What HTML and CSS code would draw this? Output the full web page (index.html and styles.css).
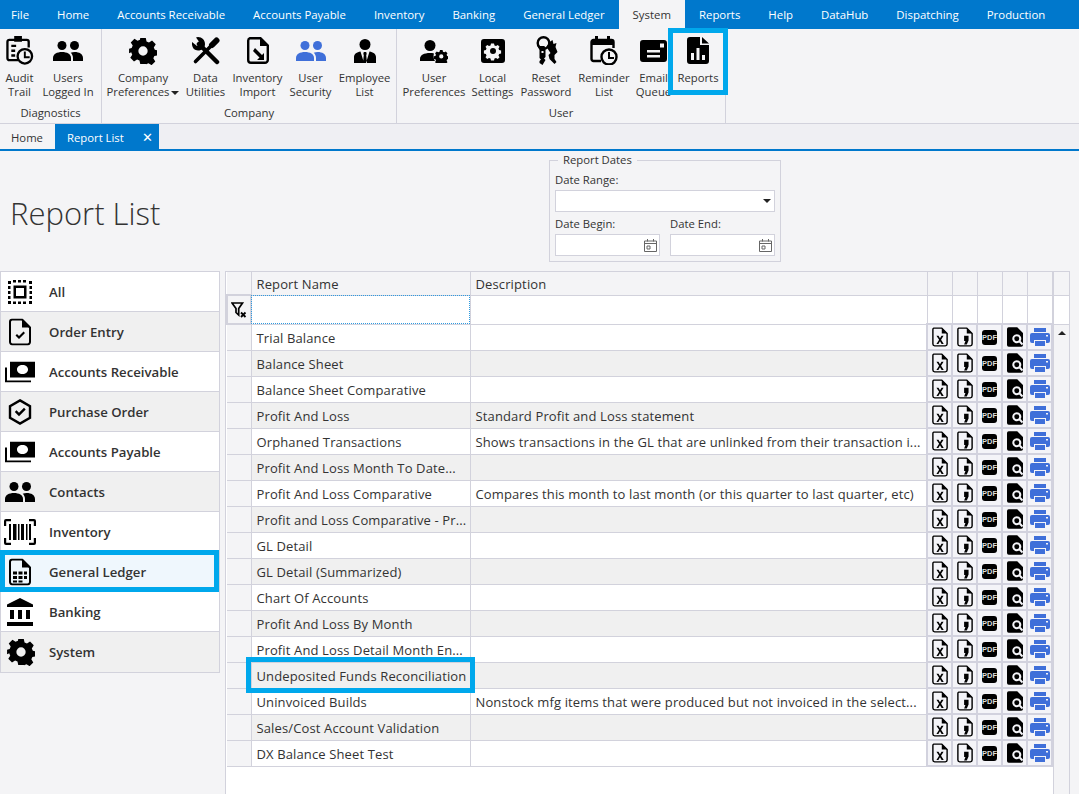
FILE: index.html
```html
<!doctype html>
<html>
<head>
<meta charset="utf-8">
<title>Report List</title>
<link rel="stylesheet" href="styles.css">
</head>
<body>

<svg class="defs" width="0" height="0">
  <symbol id="i-users" viewBox="0 0 30 20">
    <circle cx="9" cy="4.500" r="4.500"/><circle cx="21.500" cy="4.500" r="4.500"/>
    <path d="M0 20v-3c0-4 4-6 9-6s9 2 9 6v3z"/>
    <path d="M20 20v-3c0-2-.8-3.800-2.300-5.200 1.200-.5 2.600-.8 4-.8 4.500 0 8.300 2 8.300 6v3z"/>
  </symbol>
  <symbol id="i-gear" viewBox="0 0 28 28">
    <path fill-rule="evenodd" d="M11 0h6l.8 3.800 2.600 1.100 3.300-2.100 4 4-2.100 3.300 1.100 2.600 3.300.8v5l-3.800.8-1.100 2.600 2.100 3.300-4 4-3.300-2.100-2.600 1.100L17 28h-6l-.8-3.800-2.600-1.100-3.300 2.100-4-4 2.100-3.300-1.100-2.600L-1 16.500v-5l2.800-.8 1.100-2.600-2.100-3.300 4-4 3.300 2.100 2.600-1.100zM14 9a5 5 0 1 0 0 10 5 5 0 0 0 0-10z" transform="translate(1 1) scale(.93)"/>
  </symbol>
  <symbol id="i-audit" viewBox="0 0 28 30">
    <path fill="none" stroke="#000" stroke-width="2.400" d="M12 25H3a2 2 0 0 1-2-2V6a2 2 0 0 1 2-2h18a2 2 0 0 1 2 2v6"/>
    <path d="M8 0h8v6H8zM5 9h5v2.500H5zM5 14h4v2.500H5zM5 19h4v2.500H5z"/>
    <circle cx="19" cy="21" r="7.500" fill="none" stroke="#000" stroke-width="2.400"/>
    <path d="M18 16h2v5h4v2h-6z"/>
  </symbol>
  <symbol id="i-tools" viewBox="0 0 28 28">
    <path fill="none" stroke="#000" stroke-width="4.500" stroke-linecap="round" d="M7 7l18 18"/>
    <path fill-rule="evenodd" d="M6 0c4 0 7 3 7 7s-3 6.500-7 6.500S-.5 10.500 0 5l5 4 3-3-4-5.500C4.500.2 5.200 0 6 0z"/>
    <path fill="none" stroke="#000" stroke-width="3.600" stroke-linecap="round" d="M3.500 24.500L19 9"/>
    <path fill="none" stroke="#000" stroke-width="6" stroke-linecap="round" d="M20 8l4.500-4.500"/>
  </symbol>
  <symbol id="i-import" viewBox="0 0 22 27">
    <path fill="none" stroke="#000" stroke-width="2.400" d="M3 1.200h10.500l7.300 7.300V23a2.800 2.800 0 0 1-2.800 2.800H4A2.800 2.800 0 0 1 1.200 23V4A2.800 2.800 0 0 1 3 1.200z"/>
    <path d="M13 1v8h8zM8 11l7 7 2-2v7H10l2.500-2.500-6.500-6.500z"/>
  </symbol>
  <symbol id="i-employee" viewBox="0 0 22 24">
    <circle cx="11" cy="5.500" r="5.500"/>
    <path d="M0 24v-6c0-3 3-5 6.500-5.500L10 24zM22 24v-6c0-3-3-5-6.500-5.500L12 24zM9.800 13h2.400l.5 2-.5 1 .8 8H9l.8-8-.5-1z"/>
  </symbol>
  <symbol id="i-userpref" viewBox="0 0 28 23">
    <circle cx="10" cy="5.500" r="5.500"/>
    <path d="M0 21v-2c0-4 4-6 10-6 1.500 0 2.800.1 4 .4-.8 2.200-.6 5.400 1 7.600z"/>
    <path fill-rule="evenodd" d="M20 9.500h3l.5 2 1.500.6 1.800-1 2 2-1 1.800.6 1.500 2 .5v3l-2 .5-.6 1.500 1 1.800-2 2-1.800-1-1.500.6-.5 2h-3l-.5-2-1.500-.6-1.800 1-2-2 1-1.800-.6-1.500-2-.5v-3l2-.5.6-1.500-1-1.800 2-2 1.800 1 1.500-.6zM21.500 14.500a2.500 2.500 0 1 0 0 5 2.500 2.500 0 0 0 0-5z" transform="translate(3 2) scale(.85)"/>
  </symbol>
  <symbol id="i-local" viewBox="0 0 24 24">
    <path fill-rule="evenodd" d="M3 0h18a3 3 0 0 1 3 3v18a3 3 0 0 1-3 3H3a3 3 0 0 1-3-3V3a3 3 0 0 1 3-3zM10 4.500l-.5 2-1.500.6-1.800-1-1.700 1.700 1 1.800-.6 1.500-2 .5v2.800l2 .5.6 1.500-1 1.800 1.700 1.700 1.800-1 1.500.6.500 2h3l.5-2 1.500-.6 1.800 1 1.700-1.700-1-1.800.6-1.500 2-.5v-2.800l-2-.5-.6-1.500 1-1.800-1.700-1.700-1.800 1-1.500-.6-.5-2zM12 9a3 3 0 1 1 0 6 3 3 0 0 1 0-6z"/>
  </symbol>
  <symbol id="i-keys" viewBox="0 0 23 29">
    <circle cx="9" cy="7" r="5.800" fill="none" stroke="#000" stroke-width="2.400"/>
    <path d="M3 10h7l1 3v8l-1.500 1.500L11 24l-3 5-3-2v-2l1.500-1.500L5 22v-8z"/>
    <path d="M12 11l3-5 3-2 1 4 3-1-1 4 2 5-3 3v4l2 3-2 2-5-5-1-4 2-2z"/>
    <path d="M7 15h2v2H7z" fill="#f4f4f6"/>
  </symbol>
  <symbol id="i-calendar" viewBox="0 0 28 29">
    <path fill="none" stroke="#000" stroke-width="2.400" d="M11 25H3.500a2 2 0 0 1-2-2V6a2 2 0 0 1 2-2h18a2 2 0 0 1 2 2v6"/>
    <path d="M1.500 4h22v5h-22zM5 0h3v5H5zM17 0h3v5h-3z"/>
    <circle cx="19" cy="21" r="7.500" fill="#f4f4f6" stroke="#000" stroke-width="2.400"/>
    <path d="M18 16h2v5h4v2h-6z"/>
  </symbol>
  <symbol id="i-mail" viewBox="0 0 27 22">
    <path fill-rule="evenodd" d="M3 0h21a3 3 0 0 1 3 3v16a3 3 0 0 1-3 3H3a3 3 0 0 1-3-3V3a3 3 0 0 1 3-3zM20 3.500v4h4v-4zM7 10v2.500h13V10zM7 15v2.500h13V15z"/>
  </symbol>
  <symbol id="i-report" viewBox="0 0 22 27">
    <path fill-rule="evenodd" d="M3 0h10v8h9v16a3 3 0 0 1-3 3H3a3 3 0 0 1-3-3V3a3 3 0 0 1 3-3zM15 0l7 6.500h-7zM4 16v7h3v-7zM9.500 11v12h3V11zM15 18v5h3v-5z"/>
  </symbol>
  <symbol id="i-all" viewBox="0 0 24 24">
    <path fill-rule="evenodd" d="M5.500 5.500h13v13h-13zM8 8v8h8V8z"/>
    <path d="M0 1h3v3H0zM5 0h3v2.500H5zM10 0h3v2.500h-3zM15 0h3v2.500h-3zM21 1h3v3h-3zM0 6h2.500v3H0zM0 11h2.500v3H0zM0 16h2.500v3H0zM21.500 6H24v3h-2.500zM21.500 11H24v3h-2.500zM21.500 16H24v3h-2.500zM0 21h3v3H0zM5 21.500h3V24H5zM10 21.500h3V24h-3zM15 21.500h3V24h-3zM21 21h3v3h-3z"/>
  </symbol>
  <symbol id="i-doccheck" viewBox="0 0 22 27">
    <path fill="none" stroke="#000" stroke-width="2" d="M3 1h10l8 8v14.500a2.500 2.500 0 0 1-2.500 2.500H3.500A2.500 2.500 0 0 1 1 23.500V3.500A2.500 2.500 0 0 1 3 1z"/>
    <path d="M13 1v8h8v-1l-7-7zM6.500 17l1.500-1.500 2 2 4.500-4.500 1.500 1.500-6 6z"/>
  </symbol>
  <symbol id="i-money" viewBox="0 0 30 21">
    <path fill-rule="evenodd" d="M5 0h25v16H5zM17.500 3.500c-3.300 0-5.500 2-5.500 4.500s2.200 4.500 5.500 4.500S23 10.500 23 8s-2.200-4.500-5.500-4.500z"/>
    <path d="M0 6h2v13h24v2H0z"/>
  </symbol>
  <symbol id="i-hexcheck" viewBox="0 0 24 26">
    <path fill="none" stroke="#000" stroke-width="2.400" d="M12 1.400l10 5.800v11.600l-10 5.800-10-5.800V7.200z"/>
    <path d="M6.800 13l1.700-1.700 2.500 2.500 5-5 1.700 1.700-6.700 6.700z"/>
  </symbol>
  <symbol id="i-barcode" viewBox="0 0 32 26">
    <path d="M0 7V2a2 2 0 0 1 2-2h5v2.200H2.200V7zM25 0h5a2 2 0 0 1 2 2v5h-2.200V2.200H25zM0 19h2.200v4.800H7V26H2a2 2 0 0 1-2-2zM29.800 19H32v5a2 2 0 0 1-2 2h-5v-2.200h4.800zM5 5h2v16H5zM9 5h3.500v16H9zM14 5h1.500v16H14zM17 5h3v16h-3zM22 5h1.500v16H22zM25 5h2v16h-2z"/>
  </symbol>
  <symbol id="i-ledger" viewBox="0 0 22 27">
    <path fill="none" stroke="#000" stroke-width="2" d="M3 1h10l8 8v14.500a2.500 2.500 0 0 1-2.500 2.500H3.500A2.500 2.500 0 0 1 1 23.500V3.500A2.500 2.500 0 0 1 3 1z"/>
    <path d="M13 1v8h8v-1l-7-7zM4 13h4v3H4zM9.500 13h4v3h-4zM15 13h3v3h-3zM4 17.500h4v3H4zM9.500 17.500h4v3h-4zM15 17.500h3v3h-3zM4 22h4v2H4zM9.500 22h4v2h-4z"/>
  </symbol>
  <symbol id="i-bank" viewBox="0 0 26 28">
    <path d="M13 0l13 6.500V9H0V6.500zM3 12h4v9H3zM11 12h4v9h-4zM19 12h4v9h-4zM0 24h26v4H0z"/>
  </symbol>
  <symbol id="i-xls" viewBox="0 0 18 22">
    <path fill="none" stroke="#000" stroke-width="1.600" d="M2 1h9l6 6v12a2 2 0 0 1-2 2H3a2 2 0 0 1-2-2V2.500A1.500 1.500 0 0 1 2 1z"/>
    <path d="M11 1v6h6zM5 9.500h2.300L9 12.500l1.700-3H13L10.200 14l3 4.800h-2.400L9 15.700l-1.800 3.100H5l3-4.800z"/>
  </symbol>
  <symbol id="i-word" viewBox="0 0 18 22">
    <path fill="none" stroke="#000" stroke-width="1.600" d="M2 1h9l6 6v12a2 2 0 0 1-2 2H3a2 2 0 0 1-2-2V2.500A1.500 1.500 0 0 1 2 1z"/>
    <path d="M11 1v6h6zM8 9.500h5v5.500l-2 4.500H8l1.500-4H8z"/>
  </symbol>
  <symbol id="i-preview" viewBox="0 0 18 22">
    <path fill-rule="evenodd" d="M2 0h9.500L18 6.500V20a2 2 0 0 1-2 2H2a2 2 0 0 1-2-2V2a2 2 0 0 1 2-2zM11 8a5 5 0 1 0 2.700 9.200l3 3 1.600-1.600-3-3A5 5 0 0 0 11 8zm0 2.200a2.800 2.800 0 1 1 0 5.600 2.800 2.800 0 0 1 0-5.600z"/>
  </symbol>
  <symbol id="i-print" viewBox="0 0 20 18">
    <path fill="#3f6fd9" fill-rule="evenodd" d="M4 0h12v4H4zM2 5h16a2 2 0 0 1 2 2v6a2 2 0 0 1-2 2h-2v-3H4v3H2a2 2 0 0 1-2-2V7a2 2 0 0 1 2-2zM5 13h10v5H5zM16 7v1.500h2V7z"/>
  </symbol>
  <symbol id="i-filter" viewBox="0 0 16 16">
    <path fill="none" stroke="#000" stroke-width="1.700" d="M1 1h10.500L7.700 6.500V13L5 10.500V6.500z"/>
    <path fill="none" stroke="#000" stroke-width="1.800" d="M10 10.500l4.500 4.500M14.500 10.500L10 15"/>
  </symbol>
  <symbol id="i-date" viewBox="0 0 13 13">
    <path fill="none" stroke="#666" d="M.5 2h12v10.500H.5zM.5 4.500h12M3.500 0v2.500M9.500 0v2.500M3 7h3v3H3z"/>
  </symbol>
</svg>

<div class="menubar">
  <span class="menu">File</span>
  <span class="menu">Home</span>
  <span class="menu">Accounts Receivable</span>
  <span class="menu">Accounts Payable</span>
  <span class="menu">Inventory</span>
  <span class="menu">Banking</span>
  <span class="menu">General Ledger</span>
  <span class="menu active">System</span>
  <span class="menu">Reports</span>
  <span class="menu">Help</span>
  <span class="menu">DataHub</span>
  <span class="menu">Dispatching</span>
  <span class="menu">Production</span>
</div>

<div class="ribbon">
  <div class="group group-diag">
    <div class="tools">
      <div class="tool"><svg class="ic ic-audit"><use href="#i-audit"/></svg><span>Audit<br>Trail</span></div>
      <div class="tool"><svg class="ic ic-users"><use href="#i-users"/></svg><span>Users<br>Logged In</span></div>
    </div>
    <div class="group-name">Diagnostics</div>
  </div>
  <div class="group group-company">
    <div class="tools">
      <div class="tool"><svg class="ic ic-gear"><use href="#i-gear"/></svg><span>Company<br>Preferences<i class="caret"></i></span></div>
      <div class="tool"><svg class="ic ic-gear"><use href="#i-tools"/></svg><span>Data<br>Utilities</span></div>
      <div class="tool"><svg class="ic ic-doc"><use href="#i-import"/></svg><span>Inventory<br>Import</span></div>
      <div class="tool"><svg class="ic ic-users blue"><use href="#i-users"/></svg><span>User<br>Security</span></div>
      <div class="tool"><svg class="ic ic-employee"><use href="#i-employee"/></svg><span>Employee<br>List</span></div>
    </div>
    <div class="group-name">Company</div>
  </div>
  <div class="group group-user">
    <div class="tools">
      <div class="tool"><svg class="ic ic-userpref"><use href="#i-userpref"/></svg><span>User<br>Preferences</span></div>
      <div class="tool"><svg class="ic ic-local"><use href="#i-local"/></svg><span>Local<br>Settings</span></div>
      <div class="tool"><svg class="ic ic-audit"><use href="#i-keys"/></svg><span>Reset<br>Password</span></div>
      <div class="tool"><svg class="ic ic-audit"><use href="#i-calendar"/></svg><span>Reminder<br>List</span></div>
      <div class="tool"><svg class="ic ic-mail"><use href="#i-mail"/></svg><span>Email<br>Queue</span></div>
      <div class="tool tool-reports"><svg class="ic ic-doc"><use href="#i-report"/></svg><span>Reports</span></div>
    </div>
    <div class="group-name">User</div>
  </div>
</div>

<div class="doc-tabs">
  <span class="doc-tab">Home</span>
  <span class="doc-tab current">Report List<b class="close">✕</b></span>
</div>

<div class="report-head">
  <h1>Report List</h1>
  <fieldset class="dates">
    <legend>Report Dates</legend>
    <label>Date Range:</label>
    <div class="field"><i class="caret"></i></div>
    <div class="date-pair">
      <div>
        <label>Date Begin:</label>
        <div class="field"><svg class="ic-date"><use href="#i-date"/></svg></div>
      </div>
      <div>
        <label>Date End:</label>
        <div class="field"><svg class="ic-date"><use href="#i-date"/></svg></div>
      </div>
    </div>
  </fieldset>
</div>

<div class="report-body">
  <ul class="modules">
    <li><svg class="m-all"><use href="#i-all"/></svg>All</li>
    <li class="alt"><svg class="m-doc"><use href="#i-doccheck"/></svg>Order Entry</li>
    <li><svg class="m-money"><use href="#i-money"/></svg>Accounts Receivable</li>
    <li class="alt"><svg class="m-hex"><use href="#i-hexcheck"/></svg>Purchase Order</li>
    <li><svg class="m-money"><use href="#i-money"/></svg>Accounts Payable</li>
    <li class="alt"><svg class="m-money"><use href="#i-users"/></svg>Contacts</li>
    <li><svg class="m-bar"><use href="#i-barcode"/></svg>Inventory</li>
    <li class="selected"><svg class="m-doc"><use href="#i-ledger"/></svg>General Ledger</li>
    <li><svg class="m-bank"><use href="#i-bank"/></svg>Banking</li>
    <li class="alt"><svg class="m-gear"><use href="#i-gear"/></svg>System</li>
  </ul>

  <div class="grid-wrap">
    <table class="grid" id="grid">
      <colgroup>
        <col class="c-ind"><col class="c-name"><col class="c-desc">
        <col class="c-ico"><col class="c-ico"><col class="c-ico"><col class="c-ico"><col class="c-ico">
      </colgroup>
      <thead>
        <tr class="head-row">
          <th></th><th>Report Name</th><th>Description</th>
          <th></th><th></th><th></th><th></th><th></th>
        </tr>
        <tr class="filter-row">
          <td class="ind filter-ind"><svg class="ic-filter"><use href="#i-filter"/></svg></td>
          <td class="focused"></td><td></td>
          <td></td><td></td><td></td><td></td><td></td>
        </tr>
      </thead>
      <tbody id="rows"></tbody>
    </table>
    <div class="scroll-col">
      <div class="scroll-head"></div>
      <div class="scroll-filter"></div>
      <div class="scroll-bar"><i class="scroll-up"></i></div>
    </div>
  </div>
</div>

<script>
var reports = [
  ["Trial Balance", ""],
  ["Balance Sheet", ""],
  ["Balance Sheet Comparative", ""],
  ["Profit And Loss", "Standard Profit and Loss statement"],
  ["Orphaned Transactions", "Shows transactions in the GL that are unlinked from their transaction i..."],
  ["Profit And Loss Month To Date...", ""],
  ["Profit And Loss Comparative", "Compares this month to last month (or this quarter to last quarter, etc)"],
  ["Profit and Loss Comparative - Pr...", ""],
  ["GL Detail", ""],
  ["GL Detail (Summarized)", ""],
  ["Chart Of Accounts", ""],
  ["Profit And Loss By Month", ""],
  ["Profit And Loss Detail Month En...", ""],
  ["Undeposited Funds Reconciliation", ""],
  ["Uninvoiced Builds", "Nonstock mfg items that were produced but not invoiced in the select..."],
  ["Sales/Cost Account Validation", ""],
  ["DX Balance Sheet Test", ""]
];

function iconCell(name, cls) {
  return "<td class='act'><svg class='" + cls + "'><use href='#" + name + "'/></svg></td>";
}

function pdfCell() {
  return "<td class='act'><span class='pdf'>PDF</span></td>";
}

var html = "";
for (var i = 0; i < reports.length; i++) {
  var cls = i % 2 == 1 ? "alt" : "";
  var nameCls = reports[i][0] == "Undeposited Funds Reconciliation" ? " class='callout'" : "";
  html += "<tr class='" + cls + "'><td class='ind'></td><td" + nameCls + ">" + reports[i][0] + "</td><td>" + reports[i][1] + "</td>"
    + iconCell("i-xls", "a-doc") + iconCell("i-word", "a-doc") + pdfCell() + iconCell("i-preview", "a-doc") + iconCell("i-print", "a-print")
    + "</tr>";
}
document.getElementById("rows").innerHTML = html;
</script>
</body>
</html>
```
FILE: styles.css
```css
* {
    box-sizing: border-box;
}

html, body {
    height: 794px;
}

body {
    margin: 0;
    overflow: hidden;
    background-color: #f4f4f6;
    color: #333;
    font-family: "Open Sans", "Liberation Sans", sans-serif;
    font-size: 11.3px;
}

.defs {
    position: absolute;
}

/* top menu */
.menubar {
    display: flex;
    height: 29px;
    background-color: #0078cc;
    color: #fff;
    font-size: 11.4px;
}

.menu {
    padding: 0 14px;
    line-height: 29px;
    white-space: nowrap;
}

.menu:first-child {
    padding-left: 11px;
}

.menu.active {
    background-color: #f4f4f6;
    color: #333;
}

/* ribbon */
.ribbon {
    display: flex;
    height: 95px;
    border-bottom: 1px solid #d2d2dc;
}

.group {
    display: flex;
    flex-direction: column;
    border-right: 1px solid #d2d2dc;
}

.group-diag {
    width: 102px;
}

.group-company {
    width: 295px;
}

.group-user {
    width: 329px;
}

.tools {
    display: grid;
    height: 74px;
}

.group-diag .tools {
    grid-template-columns: 39px 58px;
}

.group-company .tools {
    grid-template-columns: 2px 78px 47px 57px 49px 59px;
}

.group-company .tools::before {
    content: "";
}

.group-user .tools {
    grid-template-columns: 3px 68px 49px 58px 58px 41px 48px;
}

.group-user .tools::before {
    content: "";
}

.tool {
    display: flex;
    flex-direction: column;
    align-items: center;
    height: 70px;
    text-align: center;
    line-height: 14px;
    white-space: nowrap;
}

.tool span {
    margin-top: auto;
}

.tool-reports {
    height: 55px;
    margin-top: 5px;
    outline: 5px solid #00a8ec;
    outline-offset: 1px;
}

.tool-reports .ic {
    margin-top: 3px;
}

.tool-reports span {
    margin-top: 7px;
}

.ic {
    display: block;
    margin-top: 8px;
    fill: #000;
}

.ic-audit {
    width: 28px;
    height: 29px;
    margin-top: 7px;
}

.ic-users {
    width: 30px;
    height: 20px;
    margin-top: 12px;
}

.ic-users.blue {
    fill: #3f6fd9;
}

.ic-gear {
    width: 28px;
    height: 28px;
}

.ic-doc {
    width: 22px;
    height: 27px;
}

.ic-employee {
    width: 22px;
    height: 24px;
    margin-top: 10px;
}

.ic-userpref {
    width: 28px;
    height: 23px;
    margin-top: 11px;
}

.ic-local {
    width: 24px;
    height: 24px;
    margin-top: 10px;
}

.ic-mail {
    width: 27px;
    height: 22px;
    margin-top: 11px;
}

.group-name {
    height: 20px;
    line-height: 20px;
    text-align: center;
}

.caret {
    display: inline-block;
    margin-left: 2px;
    vertical-align: middle;
    border-top: 4px solid #222;
    border-left: 4px solid transparent;
    border-right: 4px solid transparent;
}

/* document tabs */
.doc-tabs {
    display: flex;
    height: 27px;
    border-bottom: 2px solid #0078cc;
    background-color: #efeff3;
    background-image: radial-gradient(#f6f6f8 .6px, transparent .7px);
    background-size: 4px 4px;
}

.doc-tab {
    width: 55px;
    padding-left: 11px;
    line-height: 27px;
    background-color: #f4f4f6;
}

.doc-tab.current {
    display: flex;
    justify-content: space-between;
    width: 104px;
    padding: 0 6px 0 12px;
    background-color: #0078cc;
    color: #fff;
}

.close {
    font-family: "DejaVu Sans", sans-serif;
    font-size: 13px;
    font-weight: normal;
}

/* heading and dates */
.report-head {
    display: flex;
    height: 120px;
    padding-top: 2px;
}

h1 {
    width: 549px;
    margin: 0;
    padding: 38px 0 0 10px;
    color: #333;
    font-size: 31px;
    font-weight: 300;
    line-height: 44px;
}

.dates {
    width: 232px;
    height: 109px;
    margin: 0;
    padding: 0 5px;
    border: 1px solid #d2d2dc;
}

.dates legend {
    margin-left: 3px;
    margin-bottom: 1px;
    padding: 0 5px;
    line-height: 14px;
}

.dates label {
    display: block;
    margin-top: 4px;
    line-height: 15px;
}

.field {
    display: flex;
    align-items: center;
    justify-content: flex-end;
    height: 22px;
    margin-top: 3px;
    padding-right: 2px;
    background-color: #fff;
    border: 1px solid #d2d2dc;
}

.field .caret {
    margin-right: 1px;
}

.date-pair {
    display: flex;
    gap: 10px;
}

.date-pair > div {
    flex: 1;
}

.ic-date {
    width: 13px;
    height: 13px;
}

/* left list */
.report-body {
    display: flex;
    gap: 5px;
    height: 523px;
}

.modules {
    width: 220px;
    height: 402px;
    margin: 0;
    padding: 0;
    list-style: none;
    border: 1px solid #d2d2dc;
    border-bottom-width: 2px;
    background-color: #fff;
}

.modules li {
    display: flex;
    align-items: center;
    position: relative;
    height: 40px;
    padding-left: 48px;
    border-bottom: 1px solid #d2d2dc;
    font-size: 13.2px;
    font-weight: 600;
}

.modules li:last-child {
    border-bottom: 0;
}

.modules li.alt {
    background-color: #f0f0f0;
    background-image: radial-gradient(#f6f6f6 .6px, transparent .7px);
    background-size: 4px 4px;
}

.modules li svg {
    position: absolute;
    top: 50%;
    transform: translateY(-50%);
}

.modules li.selected {
    background-color: #eff7fd;
}

.modules li.selected::after {
    content: "";
    position: absolute;
    top: -2px;
    right: 0;
    bottom: -1px;
    left: -1px;
    border: 5px solid #00a8ec;
}

.m-all {
    left: 7px;
    width: 24px;
    height: 24px;
}

.m-doc {
    left: 8px;
    width: 22px;
    height: 27px;
}

.m-money {
    left: 4px;
    width: 30px;
    height: 21px;
}

.m-hex {
    left: 7px;
    width: 24px;
    height: 26px;
}

.m-bar {
    left: 3px;
    width: 32px;
    height: 26px;
}

.m-bank {
    left: 6px;
    width: 26px;
    height: 28px;
}

.m-gear {
    left: 6px;
    width: 28px;
    height: 28px;
}

/* report grid */
.grid-wrap {
    display: flex;
    align-items: flex-start;
    width: 845px;
    background-color: #fff;
    border: 1px solid #d2d2dc;
    border-bottom: 0;
}

.grid {
    width: 825px;
    flex: none;
    table-layout: fixed;
    border-collapse: collapse;
    font-size: 13px;
    letter-spacing: .13px;
}

.c-ind {
    width: 24px;
}

.c-name {
    width: 219px;
}

.c-desc {
    width: 457px;
}

.c-ico {
    width: 25px;
}

.grid th, .grid td {
    padding: 0 0 0 5px;
    border: 1px solid #d2d2dc;
    text-align: left;
    font-weight: normal;
    white-space: nowrap;
    overflow: hidden;
}

.grid tr:first-child th {
    border-top: 0;
}

.grid th:first-child, .grid td:first-child {
    border-left: 0;
}

.head-row th {
    height: 23px;
    padding-top: 2px;
    background-color: #f4f4f6;
}

.filter-row td {
    height: 29px;
}

.filter-row td.focused {
    outline: 1px dotted #2f9be0;
    outline-offset: -1px;
}

.grid td.filter-ind {
    padding-left: 3px;
    border: 2px solid #d2d2dc;
}

.ic-filter {
    display: block;
    width: 16px;
    height: 16px;
}

.grid tbody td {
    height: 26px;
    padding-top: 1px;
}

.grid tr.alt td {
    background-color: #f0f0f0;
    background-image: radial-gradient(#f6f6f6 .6px, transparent .7px);
    background-size: 4px 4px;
}

.grid td.ind, .grid tr.alt td.ind {
    background-color: #f4f4f6;
    background-image: none;
}

.grid td.act, .grid tr.alt td.act {
    padding: 0;
    background-color: #f4f4f8;
    background-image: none;
    border: 2px solid #d2d2de;
    text-align: center;
    line-height: 0;
}

.grid td.callout {
    overflow: visible;
    outline: 5px solid #00a8ec;
}

.a-doc {
    width: 16px;
    height: 20px;
}

.a-print {
    width: 20px;
    height: 18px;
}

.pdf {
    display: inline-block;
    width: 15px;
    height: 15px;
    background-color: #000;
    border-radius: 3px;
    color: #ddd;
    font-family: "Liberation Sans", sans-serif;
    font-size: 7.5px;
    font-weight: bold;
    letter-spacing: 0;
    line-height: 15px;
    text-align: center;
}

.scroll-col {
    display: flex;
    flex-direction: column;
    width: 18px;
    height: 100%;
    border-left: 1px solid #d2d2dc;
}

.scroll-head {
    height: 24px;
    border-bottom: 1px solid #d2d2dc;
}

.scroll-filter {
    height: 29px;
    background-color: #fff;
    border-bottom: 1px solid #d2d2dc;
}

.scroll-head, .scroll-bar {
    background-color: #f4f4f6;
}

.scroll-bar {
    flex: 1;
    padding-top: 6px;
}

.scroll-up {
    display: block;
    width: 0;
    margin: 0 auto;
    border-bottom: 4px solid #222;
    border-left: 4px solid transparent;
    border-right: 4px solid transparent;
}
```
